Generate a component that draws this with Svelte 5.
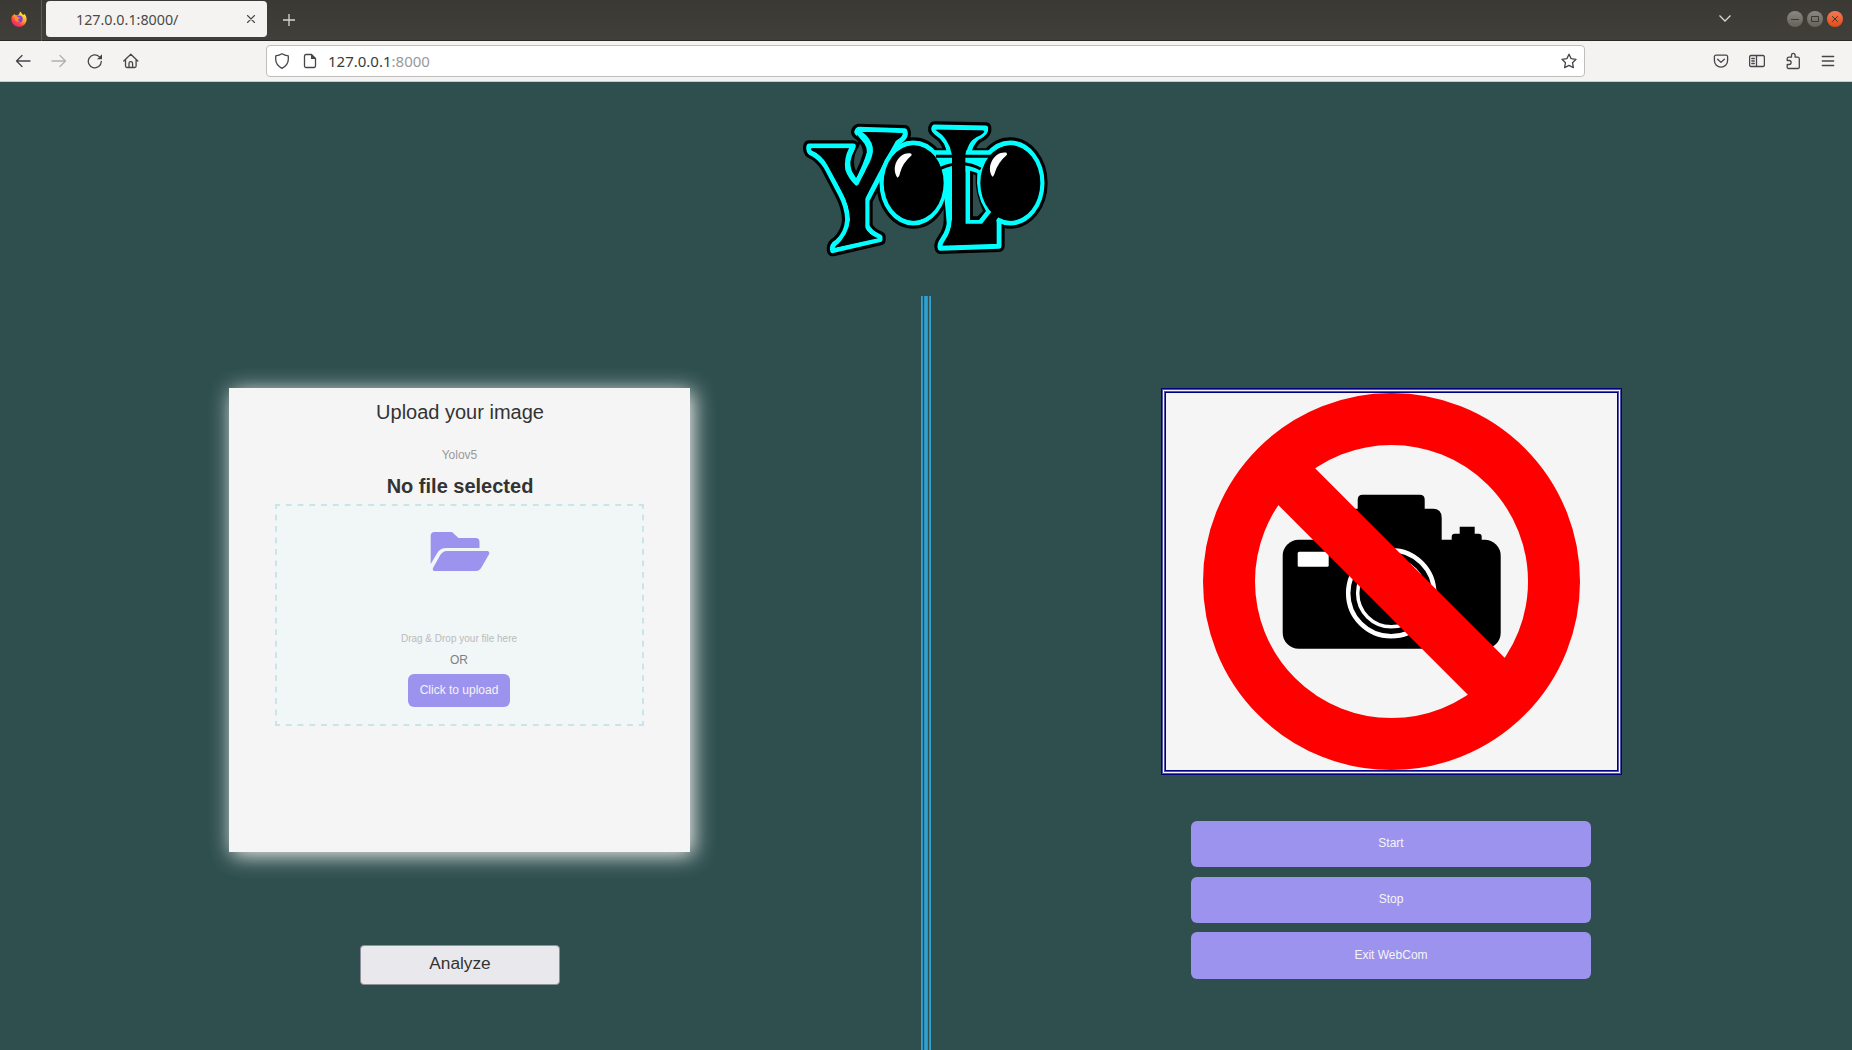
<script lang="ts">
  const actions: string[] = ['Start', 'Stop', 'Exit WebCom'];
</script>

<div class="window">
  <header class="tabs">
    <div class="app-icon">
      <svg width="16" height="16" viewBox="0 0 16 16">
        <defs>
          <linearGradient id="flame" x1="0.8" y1="0.1" x2="0.25" y2="0.95">
            <stop offset="0" stop-color="#fff04a" />
            <stop offset="0.45" stop-color="#ff9a2b" />
            <stop offset="0.75" stop-color="#ff4140" />
            <stop offset="1" stop-color="#e8208b" />
          </linearGradient>
        </defs>
        <path d="M9 .4C10.300 1.200 10.800 2.300 11 3c.8.200 1.500.6 2 1.100.2-.5.100-1 0-1.300C14.700 4 15.700 6.200 15.600 8.500 15.500 12.600 12.200 15.800 8 15.800S.4 12.500.4 8.300c0-1.700.4-3 1.200-4.300l.3 1c.4-.9 1-1.800 1.700-2.300 0 .6.200 1 .5 1.300 1 0 1.800.3 2.300.6C7.400 3.800 8.600 2.700 9 .4z" fill="url(#flame)" />
        <circle cx="8.200" cy="8" r="3.500" fill="#7b3fe4" />
        <path d="M3.800 5.300c1.700-.4 3 .1 3.900 1.200.7 0 1.400.2 1.500.5-.5.900-1.600.8-2 1.400-.2 1 .6 1.700 1.800 1.500-1.500 1.600-4.700.8-5.200-1.500z" fill="#ff8a30" />
      </svg>
    </div>
    <div class="tab">
      <span>127.0.0.1:8000/</span>
      <svg width="10" height="10" viewBox="0 0 10 10" class="line"><path d="M1.500 1.500l7 7M8.500 1.500l-7 7" /></svg>
    </div>
    <svg class="plus" width="12" height="12" viewBox="0 0 12 12"><path d="M6 0v12M0 6h12" /></svg>
    <div class="window-controls">
      <svg class="chevron" width="14" height="9" viewBox="0 0 14 9"><path d="M1.500 1.500L7 7l5.500-5.500" /></svg>
      <svg class="orb" width="16" height="16" viewBox="0 0 16 16"><path d="M4 8.500h8" /></svg>
      <svg class="orb" width="16" height="16" viewBox="0 0 16 16"><path d="M4.500 5.500h7v5h-7z" /></svg>
      <svg class="orb close" width="16" height="16" viewBox="0 0 16 16"><path d="M5.200 5.200l5.600 5.600M10.800 5.200l-5.600 5.600" /></svg>
    </div>
  </header>

  <nav class="toolbar">
    <div class="nav-buttons">
      <svg class="line" width="16" height="16" viewBox="0 0 16 16"><path d="M15 8H1.500M7 2.500L1.500 8 7 13.500" /></svg>
      <svg class="line faded" width="16" height="16" viewBox="0 0 16 16"><path d="M1 8h13.500M9 2.500L14.500 8 9 13.500" /></svg>
      <svg class="line" width="16" height="16" viewBox="0 0 16 16"><path d="M14.300 8.500A6.500 6.500 0 1 1 12.300 3.600" /><path d="M15 1.200v5h-5z" fill="#45454a" stroke="none" /></svg>
      <svg class="line" width="16" height="16" viewBox="0 0 16 16"><path d="M.8 8L7.800 1.200 14.800 8M2.500 6.800V13a1.500 1.500 0 0 0 1.500 1.500h7.600a1.500 1.500 0 0 0 1.500-1.500V6.800M6 14.500v-4a1.800 1.800 0 0 1 3.600 0v4" /></svg>
    </div>
    <div class="address">
      <svg class="line" width="16" height="16" viewBox="0 0 16 16"><path d="M8 .8c2 1.200 4 1.800 6.300 2v3.500c0 4-2.500 7-6.300 9-3.800-2-6.300-5-6.300-9V2.800C4 2.600 6 2 8 .8z" /></svg>
      <svg class="line page" width="14" height="16" viewBox="0 0 14 16"><path d="M3 1.500h5.500l4 4V13a1.500 1.500 0 0 1-1.500 1.500H3A1.500 1.500 0 0 1 1.500 13V3A1.500 1.500 0 0 1 3 1.500z" /><path d="M8 1v5h5z" fill="#45454a" stroke="none" /></svg>
      <span class="url">127.0.0.1<span>:8000</span></span>
      <svg class="line" width="16" height="16" viewBox="0 0 16 16"><path d="M8 1.200l2.100 4.400 4.900.7-3.500 3.400.9 4.900L8 12.300l-4.400 2.300.9-4.900L1 6.300l4.900-.7z" /></svg>
    </div>
    <div class="tools">
      <svg class="line" width="16" height="16" viewBox="0 0 16 16"><path d="M2.800 2.200h10.400A1.400 1.400 0 0 1 14.600 3.600V7.500a6.600 6.600 0 0 1-13.200 0V3.600A1.400 1.400 0 0 1 2.800 2.200zM4.600 6.200L8 9.400l3.400-3.200" /></svg>
      <svg class="line" width="16" height="16" viewBox="0 0 16 16"><path d="M2 2.500h12A1.400 1.400 0 0 1 15.400 4v8a1.400 1.400 0 0 1-1.400 1.500H2A1.400 1.400 0 0 1 .6 12V4A1.400 1.400 0 0 1 2 2.500zM7.500 2.500v11M2.800 5.500h2.500M2.800 8h2.500M2.800 10.500h2.500" /></svg>
      <svg class="line" width="16" height="18" viewBox="0 0 16 18"><path d="M2.200 8.500V6.700A1.500 1.500 0 0 1 3.700 5.200h2.800V3.200a1.800 1.800 0 0 1 3.600 0v2h2.700A1.500 1.500 0 0 1 14.300 6.700v8.600a1.200 1.200 0 0 1-1.200 1.200H3.400a1.200 1.200 0 0 1-1.200-1.200v-2.800h1.900a2 2 0 0 0 0-4z" /></svg>
      <svg class="line" width="14" height="16" viewBox="0 0 14 16"><path d="M1.300 3.500h11.400M1.300 8h11.400M1.300 12.500h11.400" /></svg>
    </div>
  </nav>

  <main>
    <div class="banner">
      <svg width="270" height="165" viewBox="0 0 810 495" role="img" aria-label="YOLO">
        <defs>
          <path id="letter-y" d="M57 123H190Q178 150 176 180Q178 205 199 234Q228 180 238 142Q240 112 206 88Q194 80 206 73L344 77Q352 96 324 112L298 158L231 286V362Q238 382 270 396V404L128 437Q124 420 142 410Q170 385 173 345Q172 305 150 265L108 185Q88 154 60 142Q54 132 57 123Z" />
          <path id="letter-l" d="M433 66L587 69Q590 86 562 98Q542 115 536 146V350H580L604 326H627V424L451 430Q446 420 460 400Q478 375 478 345V150Q478 108 438 82Q428 74 433 66Z" />
        </defs>
        <g class="outline">
          <use href="#letter-y" />
          <ellipse cx="370" cy="234" rx="94" ry="120" />
          <ellipse cx="661" cy="234" rx="95" ry="120" />
          <path d="M425 147H610" />
          <use href="#letter-l" />
        </g>
        <!-- lens rims and bridge of the glasses -->
        <g class="cyan">
          <use href="#letter-y" />
          <ellipse cx="370" cy="234" rx="94" ry="120" />
          <ellipse cx="661" cy="234" rx="95" ry="120" />
          <use href="#letter-l" />
        </g>
        <path d="M415 136H620L592 170L568 210L565 250L578 292L608 322L576 357H526V200H486V345L470 350L456 200Z" fill="#0ff" />
        <path d="M438 154H606M452 190Q515 162 572 192" class="bridge" />
        <path d="M540 197L562 204Q555 268 588 318L567 345H540Z" />
        <path d="M549 208L557 211Q554 262 579 318L563 334H549Z" fill="#2f4f4f" />
        <path d="M436 74L583 77Q584 86 560 96Q528 114 526 150V356H576L606 318L630 330L619 345V415L460 420Q484 380 486 345V150Q478 100 436 74Z" />
        <ellipse cx="371" cy="234" rx="90" ry="113" />
        <ellipse cx="661" cy="234" rx="90" ry="113" />
        <path d="M64 130H180Q160 160 172 194L200 238L226 202Q252 142 244 124Q238 98 212 81L338 84Q306 110 286 150L226 280V370Q236 390 264 400L134 428Q176 390 180 345Q180 305 157 262L112 180Q92 144 64 136Z" />
        <path d="M184 130Q168 160 172 192Q180 216 200 235L222 190Q246 150 242 128Q236 102 212 86Q196 76 206 73" class="edge" />
        <path d="M201 134Q190 148 186 172Q186 196 198 208Q214 176 224 142Q222 124 208 106Q210 122 201 134Z" stroke="#000" stroke-width="10" />
        <path d="M206 126Q192 146 192 172Q192 188 198 198Q212 170 219 144Q218 126 210 116Z" fill="#2f4f4f" />
        <path d="M364 146C330 138 300 184 322 218Q328 216 330 204Q338 174 365 151Z" fill="#fff" />
        <path d="M650 143C616 136 586 182 607 215Q612 214 615 202Q624 172 651 149Z" fill="#fff" />
      </svg>
    </div>

    <div class="columns">
      <section class="column">
        <div class="upload-card">
          <h1>Upload your image</h1>
          <p class="model">Yolov5</p>
          <h2>No file selected</h2>
          <div class="dropzone">
            <svg width="60" height="40" viewBox="0 0.5 60 40"><path d="M.7 32.500V4.500A4 4 0 0 1 4.700.5H22L28.500 6.500H45.500A4 4 0 0 1 49.500 10.500V16.500H16.500Q10.500 16.500 7.700 20.800Z" /><path d="M17 19.500H57.500Q60 20 59 22.800L51.700 35.500Q49.500 39.500 46 39.500H4.500Q2 39 3 36.500L10 24Q12.500 19.500 17 19.500Z" /></svg>
            <p class="hint">Drag &amp; Drop your file here</p>
            <p class="or">OR</p>
            <button class="upload">Click to upload</button>
          </div>
        </div>
        <button class="analyze">Analyze</button>
      </section>

      <div class="divider"></div>

      <section class="column">
        <div class="camera">
          <svg width="451" height="377" viewBox="0 0 451 377">
            <g transform="translate(-0.300 -0.300)">
              <rect x="117" y="147" width="218" height="109" rx="16" />
              <path d="M174 150V128Q174 116 186 116H192V107Q192 102 197 102H254Q259 102 259 107V116H267Q276 116 276 125V150ZM286 150V144Q286 141 289 141H294V134H309V141H313Q316 141 316 144V150Z" />
              <rect x="132" y="159" width="31" height="15" rx="1.500" fill="#fff" />
              <circle cx="225.500" cy="200.500" r="43" fill="none" stroke="#fff" stroke-width="4.500" />
              <circle cx="225.500" cy="200.500" r="33.500" fill="none" stroke="#fff" stroke-width="3.500" />
            </g>
            <circle cx="225.500" cy="188.500" r="162.500" fill="none" stroke="#f00" stroke-width="52" />
            <path d="M116.500 79.500L334.500 297.500" stroke="#f00" stroke-width="52" />
          </svg>
        </div>
        <div class="actions">
          {#each actions as action}
            <button>{action}</button>
          {/each}
        </div>
      </section>
    </div>
  </main>
</div>

<style>
  :global(body) { margin: 0; }
  .window {
    display: flex;
    flex-direction: column;
    width: 1852px;
    height: 1050px;
    overflow: hidden;
    background: #2f4f4f;
    font-family: "Liberation Sans", Arial, sans-serif;
  }
  svg { display: block; flex: none; }
  button { font-family: inherit; }
  .line { fill: none; stroke: #45454a; stroke-width: 1.300; stroke-linecap: round; stroke-linejoin: round; }
  .faded { stroke: #b0b0af; }

  .tabs {
    display: flex;
    align-items: center;
    box-sizing: border-box;
    height: 41px;
    flex: none;
    padding-bottom: 3px;
    border-bottom: 1px solid #2a2925;
    background: linear-gradient(#3b3934, #403f3a);
  }
  .app-icon {
    box-sizing: border-box;
    width: 42px;
    height: 41px;
    margin-top: 3px;
    padding: 11px 0 0 11px;
    border-right: 1px solid #5b5a55;
  }
  .tab {
    display: flex;
    align-items: center;
    justify-content: space-between;
    box-sizing: border-box;
    width: 221px;
    height: 36px;
    margin: 1px 0 0 4px;
    padding: 0 11px 0 30px;
    border-radius: 4px;
    background: #f4f3f2;
    color: #4b4a48;
    font: 14.300px "Noto Sans", sans-serif;
  }
  .tab .line { stroke-width: 1.100; }
  .plus { margin: 2px 0 0 16px; stroke: #d8d7d2; stroke-width: 1.300; }
  .window-controls { display: flex; align-items: center; gap: 4px; margin: 0 9px 0 auto; }
  .chevron { margin-right: 51px; fill: none; stroke: #d8d7d2; stroke-width: 1.300; }
  .orb {
    border-radius: 50%;
    background: linear-gradient(#8b8880, #64625b);
    fill: none;
    stroke: #3a3934;
  }
  .close { background: linear-gradient(#f47b56, #e04b19); }

  .toolbar {
    display: flex;
    align-items: center;
    box-sizing: border-box;
    height: 41px;
    flex: none;
    padding: 0 17px 0 15px;
    border-bottom: 1px solid #c9c8c6;
    background: #f4f3f2;
  }
  .nav-buttons { display: flex; gap: 20px; width: 251px; }
  .address {
    display: flex;
    align-items: center;
    box-sizing: border-box;
    width: 1319px;
    height: 32px;
    padding: 0 7px;
    border: 1px solid #bfbebc;
    border-radius: 4px;
    background: #fff;
  }
  .page { margin: 0 11px 0 13px; }
  .url { flex: 1; color: #3b3b3b; font: 15px "Noto Sans", sans-serif; }
  .url span { color: #999; }
  .tools { display: flex; align-items: center; gap: 20px; margin-left: auto; }

  main { flex: 1; display: flex; flex-direction: column; }
  .banner { display: flex; justify-content: center; height: 214px; }
  .banner svg { margin: 23px 2px 0 0; }
  .outline { fill: #000; stroke: #000; stroke-width: 34; stroke-linejoin: round; }
  .cyan { fill: none; stroke: #0ff; stroke-width: 15; stroke-linejoin: round; }
  .edge { fill: none; stroke: #0ff; stroke-width: 13; stroke-linejoin: round; stroke-linecap: round; }
  .bridge { fill: none; stroke: #000; stroke-width: 9; }

  .columns { flex: 1; display: flex; }
  .column { display: flex; flex-direction: column; align-items: center; width: 921px; padding-top: 92px; box-sizing: border-box; }
  /* two adjoining 5px double rules */
  .divider {
    width: 10px;
    background: repeating-linear-gradient(
      to right,
      #31a2cf 0 1px,
      #3092ba 1px 2px,
      #2f4f4f 2px 3px,
      #3092ba 3px 4px,
      #31a2cf 4px 5px
    );
  }

  .upload-card {
    display: flex;
    flex-direction: column;
    align-items: center;
    box-sizing: border-box;
    width: 461px;
    height: 464px;
    margin-right: 2px;
    padding-top: 12px;
    background: #f5f5f5;
    box-shadow: 3px 3px 20px #f5f5f5;
  }
  h1, h2, p { margin: 0; white-space: nowrap; }
  h1 { padding-left: 1px; color: #333; font-size: 20px; font-weight: 400; line-height: 24px; }
  .model { margin-top: 23px; color: #999; font-size: 12px; line-height: 16px; }
  h2 { margin-top: 11px; padding-left: 1px; color: #333; font-size: 20px; line-height: 24px; }
  /* dashed frame with 6px dashes, half a dash on each side of every corner */
  .dropzone {
    --dash: #cbe4e9;
    --row: linear-gradient(to right, var(--dash) 3px, transparent 3px calc(100% - 3px), var(--dash) calc(100% - 3px));
    --col: linear-gradient(var(--dash) 3px, transparent 3px calc(100% - 3px), var(--dash) calc(100% - 3px));
    display: flex;
    flex-direction: column;
    align-items: center;
    box-sizing: border-box;
    width: 369px;
    height: 222px;
    margin-top: 6px;
    padding: 28px 2px 0;
    background:
      var(--row) 2px 0 / 11.774px 2px repeat-x,
      var(--row) 2px 100% / 11.774px 2px repeat-x,
      var(--col) 0 2px / 2px 11.474px repeat-y,
      var(--col) 100% 2px / 2px 11.474px repeat-y,
      #f1f6f7;
  }
  .dropzone svg { margin-left: 1px; fill: #9b93ed; }
  .hint { margin-top: 59px; margin-right: 1px; color: #bbb; font-size: 10px; line-height: 16px; }
  .or { margin: 5px 1px 0 0; color: #808080; font-size: 12px; line-height: 16px; }
  .upload {
    width: 102px;
    height: 33px;
    margin: 6px 1px 0 0;
    padding: 0 0 2px;
    border: 0;
    border-radius: 6px;
    background: #9b93ed;
    color: #f5f5f5;
    font-size: 12px;
  }
  .analyze {
    box-sizing: border-box;
    width: 200px;
    height: 40px;
    margin: 93px 1px 0 0;
    padding: 0 0 3px;
    border: 1px solid #8f8f9d;
    border-radius: 4px;
    background: #e9e9ed;
    color: #333;
    font-size: 17.300px;
  }
  .camera {
    box-sizing: border-box;
    width: 461px;
    height: 387px;
    margin-right: 1px;
    padding: 4px;
    border: 1px solid #000080;
    background: #f5f5f5;
    box-shadow:
      inset 0 0 0 1px #5252a7,
      inset 0 0 0 2px #f5f5f5,
      inset 0 0 0 3px #5252a7,
      inset 0 0 0 4px #000080;
  }
  .actions { display: flex; flex-direction: column; margin: 46px 2px 0 0; }
  .actions button {
    width: 400px;
    height: 46px;
    margin-bottom: 10px;
    padding: 0 0 2px 1px;
    border: 0;
    border-radius: 6px;
    background: #9b93ed;
    color: #f5f5f5;
    font-size: 12px;
  }
  .actions button:last-child { height: 47px; margin-top: -1px; padding-bottom: 1px; }
</style>
